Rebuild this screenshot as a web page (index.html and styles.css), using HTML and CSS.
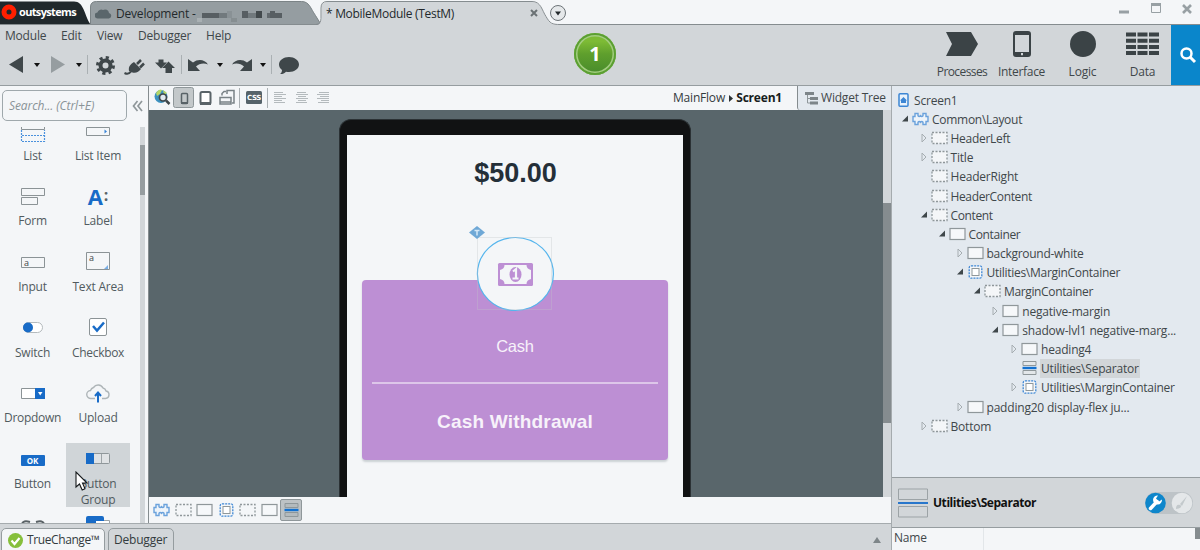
FILE: index.html
```html
<!DOCTYPE html>
<html lang="en">
<head>
<meta charset="utf-8">
<title>MobileModule (TestM)</title>
<link rel="stylesheet" href="styles.css">
</head>
<body>
<svg class="defs" width="0" height="0">
  <symbol id="block" viewBox="0 0 17 14"><path d="M3 1.500h3v2.200c.8 1 1.700 1 2.500 0 .8 1 1.700 1 2.500 0V1.500h3v3h2v5h-2v3h-3v-2.200c-.8-1-1.700-1-2.500 0-.8-1-1.700-1-2.500 0v2.200H3v-3H1v-5h2z" fill="#eef4fa" stroke="#6ba2dc" stroke-width="1.400"/></symbol>
  <symbol id="dash" viewBox="0 0 17 14"><rect x="1" y="1.500" width="15" height="11" fill="#f4f6f8" stroke="#8f979a" stroke-width="1.300" stroke-dasharray="2 1.500"/></symbol>
  <symbol id="box" viewBox="0 0 17 14"><rect x="1" y="1.500" width="15" height="11" fill="#f6f8fa" stroke="#8f979a" stroke-width="1.200"/></symbol>
  <symbol id="margin" viewBox="0 0 17 14"><rect x="2.200" y=".8" width="12.600" height="12.400" rx="2" fill="#f4f6f8" stroke="#3d86d4" stroke-width="1.300" stroke-dasharray="2 1"/><rect x="5" y="3.500" width="7" height="7" fill="#fff" stroke="#8f979a"/></symbol>
  <symbol id="separator" viewBox="0 0 17 14"><path d="M2 .5h13v4H2zM2 9.500h13v4H2z" fill="#e3e7ea" stroke="#8f979a"/><path d="M1.500 7h14" stroke="#1271d1" stroke-width="2.400"/></symbol>
  <symbol id="open" viewBox="0 0 9 10"><path d="M7 1.500v6H1z" fill="#3f474a"/></symbol>
  <symbol id="closed" viewBox="0 0 9 10"><path d="M2 1v8L6 5z" fill="none" stroke="#a6adb1"/></symbol>
  <symbol id="phone" viewBox="0 0 18 26"><path fill-rule="evenodd" d="M3 0h12q3 0 3 3v20q0 3-3 3H3q-3 0-3-3V3q0-3 3-3zM2 4v17h14V4zm6 18v2.300h2V22z" fill="#3b4346"/></symbol>
</svg>
<div class="app">
  <header class="titlebar">
    <svg class="tabs" width="1200" height="25">
      <path d="M0 24.500V1.500h74c10 0 10 13 16.500 23z" fill="#20282c"/>
      <path d="M90.500 24.500V7q0-5.500 6-5.500h205c8 0 9 7 14 14l5.500 9z" fill="#959da1" stroke="#7b8386"/>
      <path d="M317 25q4.500-1 4.500-6V8q0-6 5.500-6h205c9 0 10 9 14 15 4 7 6 8 13 8z" fill="#d2d6d9"/>
      <path d="M-1 24.500H316q5-.5 5-6V8q0-6.500 6-6.500h205c9 0 10 9 14 15 4 7 6 8 14 8H1201" fill="none" stroke="#858c8f"/>
    </svg>
    <div class="brand"><svg width="16" height="16"><circle cx="8" cy="8" r="5" fill="none" stroke="#ff1f00" stroke-width="5"/></svg><span class="t brand-name">outsystems</span></div>
    <div class="tab-dev"><svg width="17" height="11" viewBox="0 0 17 11"><path d="M3 10.500a3 3 0 01-.6-6A4 4 0 018 2a4 4 0 016 3 2.800 2.800 0 010 5.500z" fill="#5a666b"/></svg><span class="t w-dev">Development -</span>
      <svg class="masked" width="88" height="11"><g fill="#575e62"><path d="M0 7h5v4H0z" fill="#a9b0b3"/><path d="M5 2h17v5H5z"/><path d="M22 2h8v5h-8z" fill="#71797d"/><path d="M30 0h5v7h-5z" fill="#899195"/><path d="M34 7h6v4h-6z" fill="#868e91"/><path d="M45 0h6v7h-6z"/><path d="M51 2h8v5h-8z" fill="#71797d"/><path d="M59 0h6v7h-6z" fill="#42494c"/><path d="M70 2h8v5h-8z" fill="#62696d"/><path d="M73 0h5v7h-5zM78 2h7v5h-7z"/></g></svg></div>
    <div class="tab-mod"><span class="t w-mod">* MobileModule (TestM)</span><svg width="8" height="8"><path d="M1 1l6 6M7 1L1 7" stroke="#6b7275" stroke-width="2"/></svg></div>
    <svg class="more" width="18" height="18"><circle cx="9" cy="9" r="7.500" fill="#e5e8ea" stroke="#6d7478"/><path d="M6 7.500h6l-3 4z" fill="#22282b"/></svg>
    <svg class="winbtns" width="78" height="14"><path d="M1 8.500h10v3H1z" fill="#98a0a4"/><path d="M33.500 1.500h9v9h-9z" fill="none" stroke="#98a0a4"/><path d="M33 1h10v3H33z" fill="#98a0a4"/><path d="M65 3l8 8M73 3l-8 8" stroke="#98a0a4" stroke-width="2.600"/></svg>
  </header>
  <section class="ribbon">
    <div class="ribbon-left">
      <nav class="menu"><span class="t m1">Module</span><span class="t m2">Edit</span><span class="t m3">View</span><span class="t m4">Debugger</span><span class="t m5">Help</span></nav>
      <svg class="tools" width="310" height="26" viewBox="0 52 310 26">
        <g fill="#3f474a"><path d="M23 56v17L9 64.500z"/><path d="M51 56v17l14-8.500z" fill="#969da0"/>
        <path d="M34 63h6l-3 4zM76 63h6l-3 4zM217 63h6l-3 4zM260 63h6l-3 4z" fill="#111"/>
        <g fill="none" stroke="#3f474a"><circle cx="105.500" cy="65.500" r="5" stroke-width="4"/><circle cx="105.500" cy="65.500" r="8" stroke-width="3" stroke-dasharray="3.140"/></g>
        <path d="M124.500 73q4 2 6.500-1.500" fill="none" stroke="#3f474a" stroke-width="2"/><path d="M129 71c-1-5 2-7 5-9l7 7c-3 4-7 5-12 2z"/><path d="M137 64l4-4M140 67.500l4-4" stroke="#3f474a" stroke-width="2.500"/>
        <path d="M158.500 59.500h5v3h3.500l-6 6-6-6h3.500z"/><path d="M168.500 61.500l6.500 6.500h-3v5h-6.500v-5H162z"/>
        <path d="M188 59v12h12l-4-4.500c3-3 8-4 12-2-3-5-10-6-15-2z"/><path d="M252 59v12h-12l4-4.500c-3-3-8-4-12-2 3-5 10-6 15-2z"/>
        <path d="M289 57c5.500 0 10 3.300 10 7.500S294.500 72 289 72c-1 0-2 0-3-.3-1.500 1.500-3.500 2.500-6 2.300 1.500-1 2-2.500 2-4-2-1.500-3-3.500-3-5.500 0-4.200 4.500-7.500 10-7.500z"/></g>
        <path d="M87.500 55v19M181.500 55v19M271.500 55v19" stroke="#aab0b3"/>
      </svg>
    </div>
    <div class="step">1</div>
    <nav class="layers">
      <div class="layer l1"><svg width="32" height="26"><path d="M0 1h25l7 12-7 12H0l6-12z" fill="#3b4346"/></svg><span class="t n1">Processes</span></div>
      <div class="layer l2"><svg width="18" height="26"><use href="#phone"/></svg><span class="t n2">Interface</span></div>
      <div class="layer l3"><svg width="26" height="26"><circle cx="13" cy="13" r="13" fill="#3b4346"/></svg><span class="t n3">Logic</span></div>
      <div class="layer l4"><svg width="33" height="26"><path d="M0 3.500h33M0 9.800h33M0 15.900h33M0 22h33" stroke="#3b4346" stroke-width="4" stroke-dasharray="10 1.500"/></svg><span class="t n4">Data</span></div>
    </nav>
    <div class="find"><svg width="18" height="18"><circle cx="7.500" cy="7.500" r="5" fill="none" stroke="#fff" stroke-width="2.500"/><path d="M11 11l5 5" stroke="#fff" stroke-width="3"/></svg></div>
  </section>
  <main class="work">
    <div class="editor">
      <div class="middle">
        <aside class="toolbox">
          <div class="searchrow"><div class="search"><span class="t sph">Search... (Ctrl+E)</span></div><svg width="11" height="12"><path d="M5.500 1L1.500 6l4 5M10 1L6 6l4 5" fill="none" stroke="#8f979a" stroke-width="1.700"/></svg></div>
          <div class="palette">
            <div class="widgets">
              <div class="widget"><svg width="26" height="28"><path d="M1.500 7v5.500h23V7" fill="none" stroke="#8b9396"/><path d="M1.500 13v11.500h23V13M2 18.500h22" fill="none" stroke="#4a91dd" stroke-width="1.200" stroke-dasharray="2 1"/></svg><span class="t">List</span></div>
              <div class="widget"><svg width="26" height="28"><path d="M1.500 10.500h23v8h-23z" fill="none" stroke="#8b9396"/><path d="M19.500 12.500v4l2.500-2z" fill="#3783d6"/></svg><span class="t">List Item</span></div>
              <div class="widget"><svg width="26" height="28"><path d="M1.500 5.500h23v7h-23zM1.500 14.500h16v7h-16z" fill="none" stroke="#8b9396"/></svg><span class="t">Form</span></div>
              <div class="widget"><div class="glyph"><b>A</b><i>:</i></div><span class="t">Label</span></div>
              <div class="widget"><svg width="26" height="28"><path d="M1.500 9.500h23v10h-23z" fill="none" stroke="#8b9396"/><text x="4" y="18" class="small-a">a</text></svg><span class="t">Input</span></div>
              <div class="widget"><svg width="26" height="28"><path d="M1.500 4.500h23v17h-23z" fill="none" stroke="#8b9396"/><text x="4" y="13" class="small-a">a</text><path d="M23 17v4h-4z" fill="#79aee5"/></svg><span class="t">Text Area</span></div>
              <div class="widget"><svg width="26" height="28"><rect x="3.500" y="8.500" width="19" height="10" rx="5" fill="#fff" stroke="#b4babd"/><circle cx="8" cy="13.500" r="5" fill="#186bc7"/></svg><span class="t">Switch</span></div>
              <div class="widget"><svg width="26" height="28"><rect x="4.500" y="4.500" width="17" height="17" rx="1.500" fill="#fff" stroke="#8b9396"/><path d="M8 12l4 4.500 7-8" fill="none" stroke="#186bc7" stroke-width="2.500"/></svg><span class="t n2">Checkbox</span></div>
              <div class="widget"><svg width="26" height="28"><path d="M1.500 8.500h23v10h-23z" fill="#fff" stroke="#8b9396"/><path d="M15 8h10v11H15z" fill="#186bc7"/><path d="M18 12h4.500l-2.300 3.500z" fill="#fff"/></svg><span class="t n2">Dropdown</span></div>
              <div class="widget"><svg width="26" height="28"><path d="M10 18.500H6a4 4 0 01-.5-8 5 5 0 013-3 5.500 5.500 0 019.500.5 4 4 0 013 3 3.800 3.800 0 01-.5 7.500H17" fill="none" stroke="#aeb5b8" stroke-width="1.400"/><path d="M13 22.500v-9M10 16l3-3.500 3 3.500" fill="none" stroke="#186bc7" stroke-width="2"/></svg><span class="t">Upload</span></div>
              <div class="widget"><div class="okbtn"><span>OK</span></div><span class="t">Button</span></div>
              <div class="widget sel"><svg width="26" height="28"><rect x="1.500" y="8.500" width="23" height="10" rx="1" fill="#e0e3e5" stroke="#8f979a"/><path d="M1 8h8v11H1z" fill="#186bc7"/><path d="M16.500 9v9" stroke="#9da4a7"/></svg><span class="t">Button</span><span class="t">Group</span></div>
              <div class="widget"><svg width="26" height="28"><path d="M2 13q1-4 8-2M24 13q-1-4-8-2" fill="none" stroke="#596165" stroke-width="2"/></svg></div>
              <div class="widget"><svg width="26" height="28"><path d="M10 9.500h14.500V16H10z" fill="#fff" stroke="#9da4a7"/><path d="M1 15V7q0-2 2-2h14q2 0 2 2v3h-8v4z" fill="#186bc7"/></svg></div>
            </div>
            <div class="track"><div class="thumb"></div></div>
          </div>
        </aside>
        <section class="center">
          <div class="viewbar">
            <svg width="190" height="24" viewBox="149 86 190 24">
              <circle cx="161" cy="96.500" r="6.500" fill="#3c91bf"/><path d="M156 93q3-5 6-3l-2 4-3 2zM163 90l4 3-3 2z" fill="#b7d765"/><circle cx="163" cy="97.500" r="3.500" fill="#dfe9f0" stroke="#3f474a" stroke-width="1.700"/><path d="M166 100.500l3.500 3.500" stroke="#3f474a" stroke-width="2.500"/>
              <rect x="173.500" y="87.500" width="20" height="20" rx="2" fill="#c3c8ca" stroke="#8f979a"/><rect x="181.500" y="93.500" width="6" height="10" rx="1" fill="#c3c8ca" stroke="#596368" stroke-width="1.500"/><path d="M181 102h7v2h-7z" fill="#596368"/>
              <rect x="200.500" y="92" width="10" height="12" rx="1.500" fill="#fff" stroke="#596368" stroke-width="2"/><path d="M200 102h11v3h-11z" fill="#596368"/>
              <g fill="none" stroke="#798286" stroke-width="1.500"><path d="M220 97.500h11v6.500h-11zM220 102h11M227 94v-3.500h7V103h-2M222 95.500v-2l2-2h2"/></g>
              <path d="M239.500 88v20M267.500 88v20" stroke="#aab0b3"/><rect x="246" y="91" width="16" height="13" rx="1.500" fill="#56636a"/><text x="254" y="100" class="css">CSS</text>
              <g stroke="#b4babd"><path d="M274 92.500h9M274 94.500h12M274 96.500h8M274 98.500h12M274 100.500h8M274 102.500h11M297 92.500h9M296 94.500h12M298 96.500h8M296 98.500h12M298 100.500h8M296 102.500h11M319 92.500h10M317 94.500h12M320 96.500h9M317 98.500h12M321 100.500h8M318 102.500h11"/></g>
            </svg>
            <div class="crumbs"><span class="t c1">MainFlow</span><svg width="4" height="7"><path d="M0 0l4 3.500L0 7z" fill="#2b3235"/></svg><b class="t c2">Screen1</b></div>
            <div class="wtree"><svg width="13" height="13"><path d="M2.500 3v8H5M2.500 6.500H5" fill="none" stroke="#8f979a"/><path d="M0 0h9v3H0zM5 5h8v3H5zM5 9.500h8v3H5z" fill="#7d8589"/></svg><span class="t c3">Widget Tree</span></div>
          </div>
          <div class="canvas">
            <div class="device"><div class="screen">
              <div class="amount">$50.00</div>
              <div class="card"><div class="cash">Cash</div><div class="rule"></div><div class="withdraw">Cash Withdrawal</div>
                <svg class="medal" width="86" height="86" viewBox="472 226 86 86">
                  <ellipse cx="515.400" cy="274" rx="38" ry="36.500" fill="#f4f6f8" stroke="#55b5ed" stroke-width="1.200"/>
                  <rect x="477.500" y="237.500" width="74" height="72" fill="none" stroke="#c2c6ca" stroke-dasharray="1 1" opacity=".65"/>
                  <rect x="498" y="263" width="35" height="23" rx="1.500" fill="#bd8fd4"/><path d="M504.500 265h22q0 4 4.500 5v9q-4.500 1-4.500 5h-22q0-4-4.500-5v-9q4.500-1 4.500-5z" fill="#f4f6f8"/><ellipse cx="515.500" cy="274.500" rx="6" ry="7.500" fill="#bd8fd4"/><path d="M513 271.500l3-2.500v9M512.500 278.500h6" fill="none" stroke="#f4f6f8" stroke-width="2.200"/>
                  <path d="M469 232.500l8-6.500 8 6.500-8 6.500z" fill="#6fa8d6"/><path d="M474.500 230.500h5M477 230.500v5" stroke="#d5e8f7" stroke-width="1.500"/>
                </svg></div>
            </div></div>
            <div class="vscroll"><div></div></div>
          </div>
          <div class="pathbar">
            <svg width="17" height="14"><use href="#block"/></svg><svg width="17" height="14"><use href="#dash"/></svg><svg width="17" height="14"><use href="#box"/></svg><svg width="17" height="14"><use href="#margin"/></svg><svg width="17" height="14"><use href="#dash"/></svg><svg width="17" height="14"><use href="#box"/></svg><span class="cur"><svg width="17" height="14"><path d="M2 .5h13v4H2zM2 9.500h13v4H2z" fill="#b4babd" stroke="#8f979a"/><path d="M1.500 7h14" stroke="#1271d1" stroke-width="2.400"/></svg></span>
          </div>
        </section>
      </div>
      <footer class="status">
        <div class="st on"><svg width="15" height="15"><circle cx="7.500" cy="7.500" r="7.500" fill="#86bf3b"/><path d="M3.500 7.500l3 3.500 5-6" fill="none" stroke="#fff" stroke-width="2.200"/></svg><span class="t f1">TrueChange™</span></div>
        <div class="st"><span class="t f2">Debugger</span></div>
        <svg class="up" width="8" height="6"><path d="M0 6h8L4 0z" fill="#7e8689"/></svg>
      </footer>
    </div>
    <aside class="inspector">
      <div class="tree">
        <div class="row root"><svg width="12" height="14"><rect x="1" y=".8" width="9" height="12.400" rx="1" fill="#e9f2fb" stroke="#3d86d4" stroke-width="1.500"/><path d="M2 7.500L5.500 4 9 7.500H8V10H3V7.500z" fill="#3d86d4"/></svg><span class="t">Screen1</span></div>
        <div class="row d0"><svg class="ar"><use href="#open"/></svg><svg class="ic"><use href="#block"/></svg><span class="t tight">Common\Layout</span></div>
        <div class="row d1"><svg class="ar"><use href="#closed"/></svg><svg class="ic"><use href="#dash"/></svg><span class="t tight">HeaderLeft</span></div>
        <div class="row d1"><svg class="ar"><use href="#closed"/></svg><svg class="ic"><use href="#dash"/></svg><span class="t">Title</span></div>
        <div class="row d1"><svg class="ar"></svg><svg class="ic"><use href="#dash"/></svg><span class="t">HeaderRight</span></div>
        <div class="row d1"><svg class="ar"></svg><svg class="ic"><use href="#dash"/></svg><span class="t tighter">HeaderContent</span></div>
        <div class="row d1"><svg class="ar"><use href="#open"/></svg><svg class="ic"><use href="#dash"/></svg><span class="t tighter">Content</span></div>
        <div class="row d2"><svg class="ar"><use href="#open"/></svg><svg class="ic"><use href="#box"/></svg><span class="t tighter">Container</span></div>
        <div class="row d3"><svg class="ar"><use href="#closed"/></svg><svg class="ic"><use href="#box"/></svg><span class="t tight">background-white</span></div>
        <div class="row d3"><svg class="ar"><use href="#open"/></svg><svg class="ic"><use href="#margin"/></svg><span class="t tight">Utilities\MarginContainer</span></div>
        <div class="row d4"><svg class="ar"><use href="#open"/></svg><svg class="ic"><use href="#dash"/></svg><span class="t tighter">MarginContainer</span></div>
        <div class="row d5"><svg class="ar"><use href="#closed"/></svg><svg class="ic"><use href="#box"/></svg><span class="t">negative-margin</span></div>
        <div class="row d5"><svg class="ar"><use href="#open"/></svg><svg class="ic"><use href="#box"/></svg><span class="t">shadow-lvl1 negative-marg...</span></div>
        <div class="row d6"><svg class="ar"><use href="#closed"/></svg><svg class="ic"><use href="#box"/></svg><span class="t">heading4</span></div>
        <div class="row d6 picked"><svg class="ar"></svg><svg class="ic"><use href="#separator"/></svg><span class="t">Utilities\Separator</span></div>
        <div class="row d6"><svg class="ar"><use href="#closed"/></svg><svg class="ic"><use href="#margin"/></svg><span class="t tight">Utilities\MarginContainer</span></div>
        <div class="row d3"><svg class="ar"><use href="#closed"/></svg><svg class="ic"><use href="#box"/></svg><span class="t">padding20 display-flex ju...</span></div>
        <div class="row d1"><svg class="ar"><use href="#closed"/></svg><svg class="ic"><use href="#dash"/></svg><span class="t">Bottom</span></div>
      </div>
      <div class="prophead">
        <svg width="30" height="30"><path d="M.5 1h29v10.500H.5zM.5 18.500h29V29H.5z" fill="none" stroke="#9ca3a6"/><path d="M0 15h30" stroke="#2876cb" stroke-width="2"/></svg>
        <b class="t p1">Utilities\Separator</b>
        <svg class="toggle" width="50" height="24"><rect x="1" y="1" width="48" height="22" rx="11" fill="#bdc3c7"/><circle cx="11.500" cy="12" r="10.300" fill="#0e86cb"/><path d="M6.500 17.500l6.500-7" stroke="#fff" stroke-width="3.500" stroke-linecap="round"/><path d="M18 8.500a4.500 4.500 0 11-4-4l-2 3 3 3z" fill="#fff"/><circle cx="38" cy="12" r="10.300" fill="#e4e7e9"/><path d="M32 18c0-3 1-5 4-4s0 4-4 4zM36 13l7-8-5 10z" fill="#c3c9cc"/></svg>
      </div>
      <div class="props"><span class="t p2">Name</span><i class="coldiv"></i><i class="pscroll"></i></div>
    </aside>
  </main>
  <svg class="cursor" width="14" height="20" viewBox="0 0 14 20"><path d="M1 1v15l3.500-3 2.700 6 2.800-1.200L7.500 12H12z" fill="#fff" stroke="#161a1c" stroke-width="1.100"/></svg>
</div>
</body>
</html>
```
FILE: styles.css
```css
* { box-sizing: border-box; }
body { margin: 0; background: #f4f6f8; color: #3f474a; font-family: "Open Sans", "Noto Sans", sans-serif; font-size: 12px; line-height: 16px; }
svg { flex: none; display: block; }
.defs { position: absolute; }
.t { white-space: nowrap; letter-spacing: -.2px; }
.tight { letter-spacing: -.28px; }
.tighter { letter-spacing: -.36px; }
.app { position: relative; width: 1200px; height: 550px; overflow: hidden; display: flex; flex-direction: column; }

.titlebar { position: relative; height: 25px; flex: none; display: flex; align-items: flex-start; }
.titlebar > div, .more, .winbtns { position: relative; }
.tabs { position: absolute; left: 0; top: 0; }
.brand { width: 91px; height: 24px; display: flex; align-items: center; padding-left: 1px; gap: 2px; }
.brand-name { color: #fff; font: bold 11px/16px "Open Sans"; letter-spacing: -.65px; }
.tab-dev { width: 235px; height: 27px; display: flex; align-items: center; padding-left: 4px; gap: 4px; color: #23292c; }
.masked { margin: 5px 0 0 -3px; }
.tab-mod { width: 212px; height: 27px; display: flex; align-items: center; justify-content: space-between; color: #23292c; }
.w-mod { letter-spacing: -.3px; }
.tab-mod svg { margin-bottom: 2px; }
.more { margin: 4px 0 0 11px; }
.winbtns { margin: 2px 4px 0 auto; }

.ribbon { height: 61px; flex: none; background: #d2d6d9; border-bottom: 1px solid #969da0; display: flex; }
.ribbon-left { width: 574px; }
.menu { display: flex; height: 27px; padding: 3px 0 0 5px; }
.menu span { flex: none; }
.m1 { width: 56px; } .m2 { width: 36px; } .m3 { width: 41px; } .m4 { width: 68px; }
.step { width: 42px; height: 42px; margin-top: 8px; border-radius: 50%; background: linear-gradient(#7dbb35 0 20%, #5f9f2d 50%, #468a2b); box-shadow: inset 0 0 0 2px #5b9f32, inset 0 0 0 3.500px #a3cd80; color: #fff; font: bold 20px/42px "Open Sans"; text-align: center; }
.layers { display: flex; margin-left: auto; }
.layer { display: flex; flex-direction: column; align-items: center; padding-top: 6px; gap: 7px; }
.l1 { width: 60px; } .l2 { width: 59px; } .l3 { width: 63px; } .l4 { width: 57px; }
.n1 { letter-spacing: -.6px; } .n2 { letter-spacing: -.3px; }
.find { width: 29px; background: #0a86cb; display: grid; place-items: center; padding-left: 4px; }

.work { flex: 1; min-height: 0; display: flex; }
.editor { width: 891px; display: flex; flex-direction: column; }
.middle { height: 438px; display: flex; border-bottom: 1px solid #a5abae; }
.toolbox { width: 149px; border-right: 1px solid #858c8f; display: flex; flex-direction: column; }
.searchrow { display: flex; align-items: center; gap: 5px; padding: 4px 0 6px 2px; }
.search { width: 125px; height: 31px; border: 1px solid #9fa8ac; border-radius: 5px; padding: 7px 6px; color: #8a9397; font-style: italic; line-height: 15px; }
.sph { letter-spacing: -.08px; }
.palette { flex: 1; min-height: 0; overflow: hidden; display: flex; justify-content: space-between; }
.widgets { display: grid; grid-template-columns: 64px 64px; grid-auto-rows: 64px; gap: 1.700px 1.500px; margin: -12px 0 0 .5px; color: #515b60; }
.widget { display: flex; flex-direction: column; align-items: center; padding-top: 2px; }
.widget > svg, .glyph, .okbtn { margin-bottom: 2.500px; }
.sel { background: #d0d5d8; }
.small-a { font: 9px "Open Sans"; fill: #3f474a; }
.css { font: bold 7px "DejaVu Sans"; fill: #fff; text-anchor: middle; letter-spacing: -.3px; }
.glyph { height: 28px; font-size: 22px; line-height: 26px; color: #186bc7; display: flex; gap: 1px; }
.glyph i { color: #596368; font: bold 16px/25px "Open Sans"; }
.okbtn { height: 28px; padding-top: 10px; }
.okbtn span { display: block; width: 24px; height: 11px; border-radius: 1px; background: #186bc7; color: #fff; font: bold 8px/11px "Open Sans"; text-align: center; }
.track { width: 5px; margin-right: 3px; background: #d2d6d9; padding-top: 18px; }
.thumb { height: 50px; background: #969da0; }

.center { width: 742px; display: flex; flex-direction: column; }
.viewbar { height: 24px; display: flex; }
.crumbs { margin-left: auto; width: 124px; display: flex; align-items: center; justify-content: space-between; padding-right: 15px; color: #333b3e; }
.c2 { color: #171d20; }
.wtree { width: 94px; border-left: 1px solid #858c8f; border-bottom-left-radius: 3px; background: #e3e9ef; display: flex; align-items: center; gap: 3px; padding-left: 7px; }
.canvas { height: 387px; background: #59666b; display: flex; justify-content: space-between; padding-top: 9px; padding-left: 190px; }
.device { width: 352px; background: #111213; border: 1px solid #2b3134; border-bottom: 0; border-radius: 12px 12px 0 0; padding: 15px 7px 0; }
.screen { height: 362px; background: #f4f6f8; padding: 20px 15px 0; text-align: center; font-family: "Liberation Sans"; }
.amount { font: bold 27px/36px "Liberation Sans"; color: #242f38; padding-left: 1px; }
.card { position: relative; margin-top: 89px; height: 180px; border-radius: 4px; background: #bd8fd4; color: #f7f2fa; box-shadow: 0 2px 2px #cbd1d4; padding: 56px 10px 0; }
.cash { font-size: 16.500px; line-height: 20px; letter-spacing: -.2px; }
.rule { height: 2px; margin-top: 26px; background: #ddc6e9; }
.withdraw { margin-top: 28px; font-weight: bold; font-size: 19px; line-height: 20px; letter-spacing: .2px; }
.medal { position: absolute; left: 110px; top: -54px; overflow: visible; }
.vscroll { width: 8px; margin-top: -9px; background: #d2d6d9; padding: 93px 0 0; }
.vscroll div { height: 220px; background: #858c8f; }
.pathbar { flex: 1; display: flex; align-items: center; padding-left: 4px; gap: 4.500px; }
.cur { width: 22px; height: 22px; margin-left: -2px; border: 1px solid #8f979a; border-radius: 2px; background: #bdc2c5; display: grid; place-items: center; }

.status { flex: 1; background: #d2d6d9; display: flex; padding: 4px 10px 0 1px; gap: 3px; color: #333b3e; }
.st { height: 24px; border: 1px solid #959c9f; border-radius: 5px 5px 0 0; padding: 0 5px; display: flex; align-items: center; gap: 4px; width: 66px; }
.on { width: 104px; background: #f4f6f8; padding-left: 6px; }
.f1 { letter-spacing: -.4px; }
.up { margin: 9px 0 0 auto; }

.inspector { width: 309px; display: flex; flex-direction: column; border-left: 1px solid #a5abae; background: #e3e9ef; }
.tree { height: 391px; padding-top: 4px; }
.row { height: 19.200px; display: flex; align-items: center; gap: 3px; }
.row .t { padding-top: 1px; margin-bottom: -1px; }
.row .ar { width: 9px; height: 10px; margin-right: -1px; }
.row .ic { width: 17px; height: 14px; }
.root { padding-left: 6px; gap: 4px; }
.d0 { padding-left: 9px; } .d1 { padding-left: 27.500px; } .d2 { padding-left: 45.500px; } .d3 { padding-left: 63.500px; }
.d4 { padding-left: 81px; } .d5 { padding-left: 99.300px; } .d6 { padding-left: 118px; }
.picked .t { background: #d2d6d9; box-shadow: 0 0 0 1px #d2d6d9; }
.prophead { height: 51px; background: #d2d6d9; border-top: 1px solid #969da0; border-bottom: 1px solid #969da0; display: flex; align-items: center; padding: 0 6px; gap: 5px; color: #111; }
.p1 { letter-spacing: -.45px; }
.toggle { margin-left: auto; }
.props { flex: 1; background: #f4f6f8; display: flex; padding-left: 2px; }
.p2 { width: 89px; padding-top: 2px; }
.coldiv { width: 1px; background: #e2e6e9; }
.pscroll { width: 5px; height: 11px; margin-left: auto; background: #858c8f; }
.cursor { position: absolute; left: 75px; top: 471px; }
```
